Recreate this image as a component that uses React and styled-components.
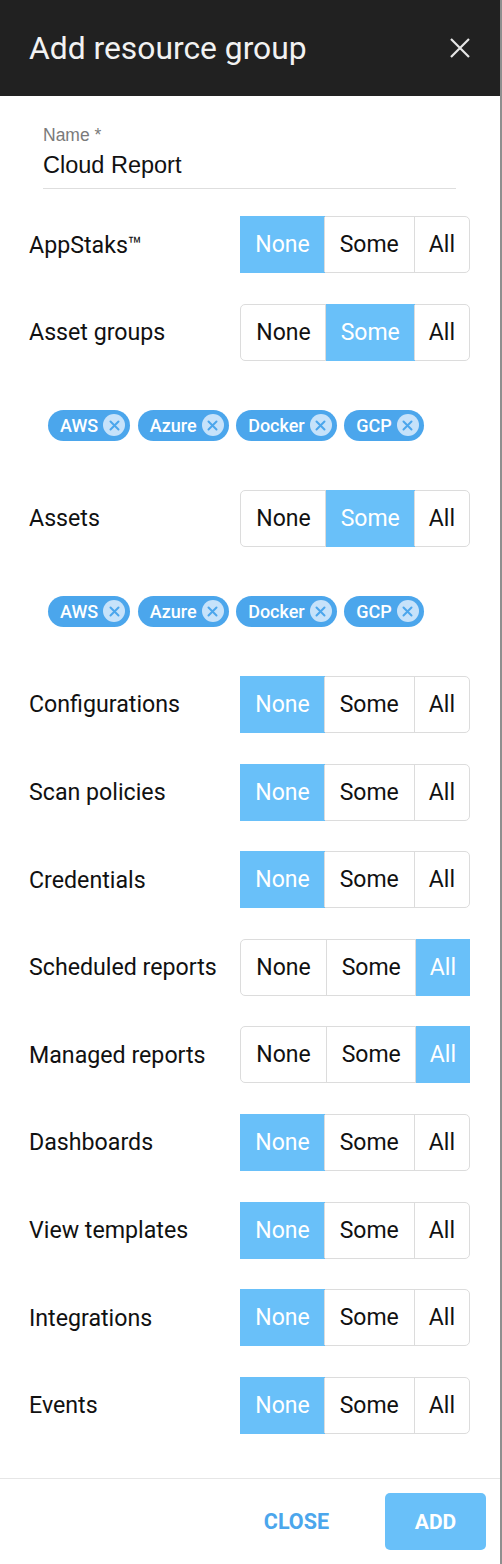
import React from 'react';
import styled, { createGlobalStyle } from 'styled-components';

const GlobalStyle = createGlobalStyle`
  html, body {
    margin: 0;
    padding: 0;
    background: #ffffff;
  }
  body {
    font-family: Roboto, "Liberation Sans", sans-serif;
  }
`;

const Dialog = styled.div`
  width: 500px;
  height: 1564px;
  border-right: 2px solid #8f8f8f;
  display: flex;
  flex-direction: column;
  background: #fff;
`;

const Header = styled.div`
  height: 96px;
  flex: none;
  background: #212121;
  display: flex;
  align-items: center;
  justify-content: space-between;
  padding: 0 28px 0 29px;
  box-sizing: border-box;
`;

const Title = styled.h1`
  margin: 0;
  font-family: Roboto, sans-serif;
  font-weight: 400;
  font-size: 31.8px;
  color: #f2f2f2;
`;

const CloseIcon = styled.button`
  border: 0;
  background: none;
  padding: 0;
  width: 24px;
  height: 24px;
  display: flex;
  align-items: center;
  justify-content: center;
  cursor: pointer;
`;

const Body = styled.div`
  flex: 1;
  padding: 30px 30px 0 29px;
  display: flex;
  flex-direction: column;
  gap: 30.6px;
`;

const Field = styled.div`
  margin: 0 14px -3.6px 14px;
  border-bottom: 1px solid #dedede;
  padding-bottom: 9px;
`;

const FieldLabel = styled.div`
  font-family: "Liberation Sans", Arial, sans-serif;
  font-size: 17.5px;
  color: #7a7a7a;
  line-height: 18px;
`;

const FieldValue = styled.div`
  font-family: "Liberation Sans", Arial, sans-serif;
  font-size: 23.5px;
  color: #111;
  line-height: 28px;
  margin-top: 7px;
`;

const Row = styled.div`
  display: flex;
  align-items: center;
  justify-content: space-between;
  height: 57px;
`;

const RowLabel = styled.span`
  font-size: 23.2px;
  color: #111;
`;

const Toggle = styled.div`
  display: flex;
  height: 57px;
  border: 1px solid #dcdcdc;
  border-radius: 5px;
  box-sizing: border-box;
`;

const Segment = styled.div`
  display: flex;
  align-items: center;
  padding: 0 15px;
  font-size: 23px;
  color: ${p => (p.$active ? '#fff' : '#111')};
  background: ${p => (p.$active ? '#69c0f9' : 'transparent')};
  margin: ${p => (p.$active ? '-1px' : '0')};
  & + & {
    border-left: 1px solid #dcdcdc;
  }
  &:last-child {
    padding: 0 14px 0 14px;
  }
`;

const ChipBlock = styled.div`
  height: 68px;
  display: flex;
  align-items: center;
  gap: 7.5px;
  padding-left: 19px;
`;

const Chip = styled.div`
  display: flex;
  align-items: center;
  height: 31px;
  border-radius: 16px;
  background: #4ba6ec;
  padding: 0 5px 0 12px;
  gap: 5px;
  font-size: 18px;
  font-weight: 500;
  color: #fff;
`;

const ChipX = styled.span`
  width: 22px;
  height: 22px;
  border-radius: 50%;
  background: #c6e2fa;
  display: flex;
  align-items: center;
  justify-content: center;
`;

const Footer = styled.div`
  height: 86px;
  flex: none;
  border-top: 1px solid #e6e6e6;
  box-sizing: border-box;
  display: flex;
  align-items: center;
  justify-content: flex-end;
  gap: 56px;
  padding-right: 14px;
`;

const TextButton = styled.button`
  border: 0;
  background: none;
  font-family: Roboto, sans-serif;
  font-weight: 700;
  font-size: 21.5px;
  color: #4ba6ec;
  padding: 0;
`;

const PrimaryButton = styled.button`
  border: 0;
  width: 101px;
  height: 57px;
  border-radius: 5px;
  background: #69c0f9;
  font-family: Roboto, sans-serif;
  font-weight: 700;
  font-size: 21px;
  color: #fff;
`;

const OPTIONS = ['None', 'Some', 'All'];
const CHIPS = ['AWS', 'Azure', 'Docker', 'GCP'];

const rows = [
  { label: 'AppStaks™', value: 'None' },
  { label: 'Asset groups', value: 'Some', chips: true },
  { label: 'Assets', value: 'Some', chips: true },
  { label: 'Configurations', value: 'None' },
  { label: 'Scan policies', value: 'None' },
  { label: 'Credentials', value: 'None' },
  { label: 'Scheduled reports', value: 'All' },
  { label: 'Managed reports', value: 'All' },
  { label: 'Dashboards', value: 'None' },
  { label: 'View templates', value: 'None' },
  { label: 'Integrations', value: 'None' },
  { label: 'Events', value: 'None' },
];

function ChipList() {
  return (
    <ChipBlock>
      {CHIPS.map(c => (
        <Chip key={c}>
          {c}
          <ChipX>
            <svg width="11" height="11" viewBox="0 0 11 11">
              <path d="M1.5 1.5 L9.5 9.5 M9.5 1.5 L1.5 9.5" stroke="#4ba6ec" strokeWidth="2" strokeLinecap="round" />
            </svg>
          </ChipX>
        </Chip>
      ))}
    </ChipBlock>
  );
}

export default function App() {
  return (
    <Dialog>
      <GlobalStyle />
      <Header>
        <Title>Add resource group</Title>
        <CloseIcon aria-label="close">
          <svg width="20" height="20" viewBox="0 0 20 20">
            <path d="M1 1 L19 19 M19 1 L1 19" stroke="#e6e6e6" strokeWidth="2.2" />
          </svg>
        </CloseIcon>
      </Header>
      <Body>
        <Field>
          <FieldLabel>Name *</FieldLabel>
          <FieldValue>Cloud Report</FieldValue>
        </Field>
        {rows.map(r => (
          <React.Fragment key={r.label}>
            <Row>
              <RowLabel>{r.label}</RowLabel>
              <Toggle>
                {OPTIONS.map(o => (
                  <Segment key={o} $active={o === r.value}>{o}</Segment>
                ))}
              </Toggle>
            </Row>
            {r.chips && <ChipList />}
          </React.Fragment>
        ))}
      </Body>
      <Footer>
        <TextButton>CLOSE</TextButton>
        <PrimaryButton>ADD</PrimaryButton>
      </Footer>
    </Dialog>
  );
}
